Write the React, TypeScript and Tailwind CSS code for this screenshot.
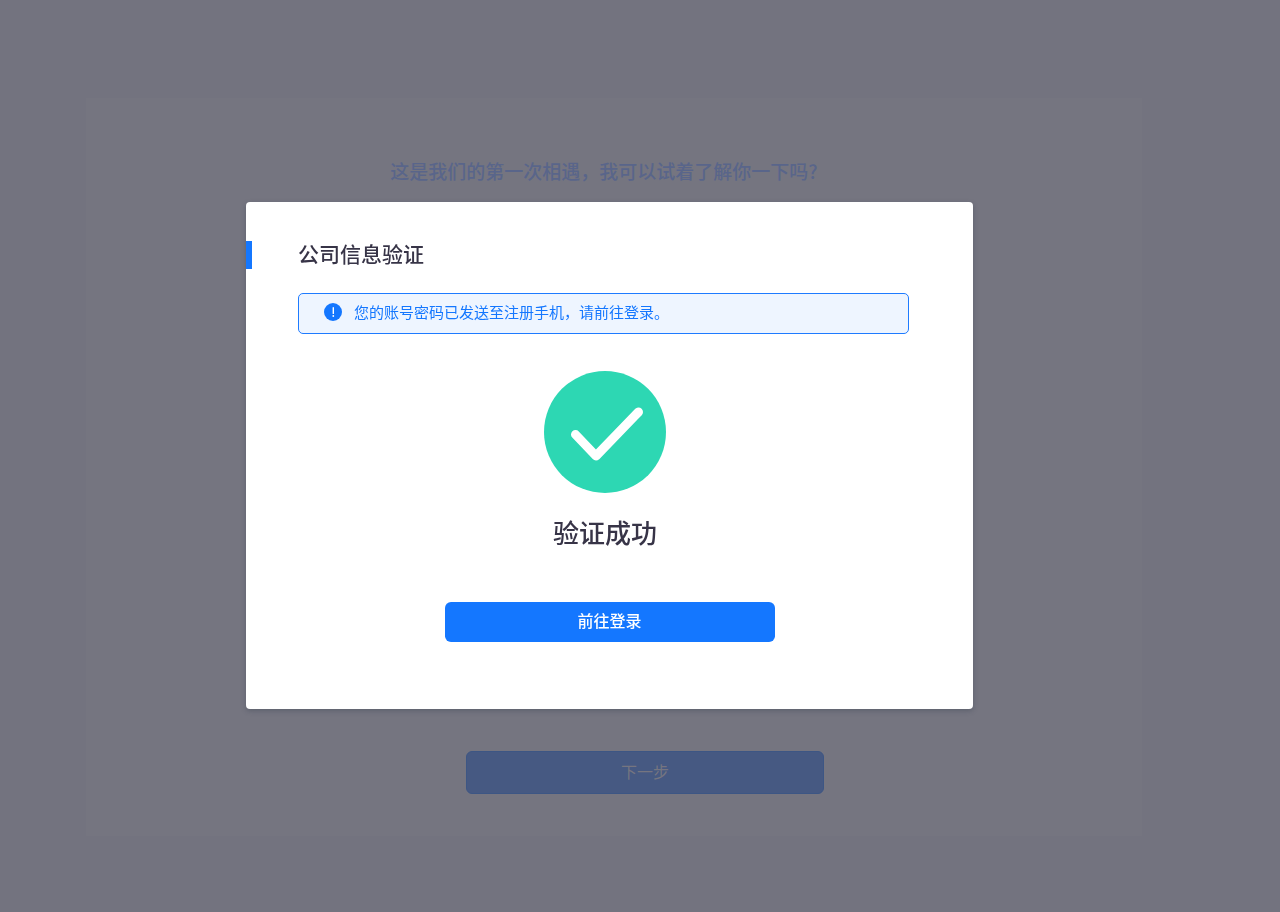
import React from "react";

function AlertIcon() {
  return (
    <svg className="size-[18px] shrink-0" viewBox="0 0 18 18" aria-hidden="true">
      <circle cx="9" cy="9" r="9" fill="#1477ff" />
      <path d="M9.3 4.8v5.6" stroke="#fff" strokeWidth="1.4" strokeLinecap="round" />
      <circle cx="9.3" cy="13" r="0.9" fill="#fff" />
    </svg>
  );
}

function SuccessIcon() {
  return (
    <svg className="size-[122px]" viewBox="0 0 122 122" aria-hidden="true">
      <circle cx="61" cy="61" r="61" fill="#2dd7b3" />
      <path
        d="M31.5 63.5L52 85L94.5 41"
        fill="none"
        stroke="#fff"
        strokeWidth="9"
        strokeLinecap="round"
        strokeLinejoin="round"
      />
    </svg>
  );
}

function WelcomePage() {
  return (
    <div className="min-h-screen bg-[#73737f] pt-[98px] pr-[138px] pb-[76px] pl-[86px]">
      <main className="flex min-h-[738px] flex-col items-center justify-between bg-[#757580] pt-[59px] pb-[42px]">
        <h1 className="mr-5 text-[19px] leading-7 font-medium text-[#59658a]">
          这是我们的第一次相遇，我可以试着了解你一下吗?
        </h1>
        <button
          type="button"
          className="ml-[62px] h-[43px] w-[358px] rounded-md border border-[#3d5684] bg-[#465982] pb-1 text-base text-[#757580]"
        >
          下一步
        </button>
      </main>
    </div>
  );
}

function VerificationDialog() {
  return (
    <div className="fixed inset-0 flex items-start justify-center overflow-auto pt-[202px] pr-[61px]">
      <section
        role="dialog"
        aria-modal="true"
        aria-labelledby="dialog-title"
        className="w-[727px] rounded bg-white pt-[39px] pb-[67px] shadow-[0_2px_5px_rgba(50,60,75,0.35)]"
      >
        <header className="flex items-center gap-[46px]">
          <span className="h-7 w-1.5 bg-[#1477ff]" />
          <h2 id="dialog-title" className="pb-1 text-[21px] leading-6 font-medium text-[#373447]">
            公司信息验证
          </h2>
        </header>
        <div
          role="status"
          className="mt-6 mr-16 ml-[52px] flex h-[41px] items-center gap-3 rounded-[5px] border border-[#1e7bff] bg-[#eef5ff] px-6 pb-1 pl-[25px] text-[15px] leading-6 text-[#1477ff]"
        >
          <AlertIcon />
          <p>您的账号密码已发送至注册手机，请前往登录。</p>
        </div>
        <div className="mt-[37px] mr-[9px] flex flex-col items-center">
          <SuccessIcon />
          <p className="mt-[21px] text-[26px] leading-9 font-medium text-[#373447]">验证成功</p>
        </div>
        <button
          type="button"
          className="mx-auto mt-[52px] block h-10 w-[330px] rounded-md bg-[#1477ff] pb-1 text-base font-medium text-white"
        >
          前往登录
        </button>
      </section>
    </div>
  );
}

export default function App() {
  return (
    <div className="font-['Noto_Sans_CJK_SC',sans-serif]">
      <WelcomePage />
      <VerificationDialog />
    </div>
  );
}
